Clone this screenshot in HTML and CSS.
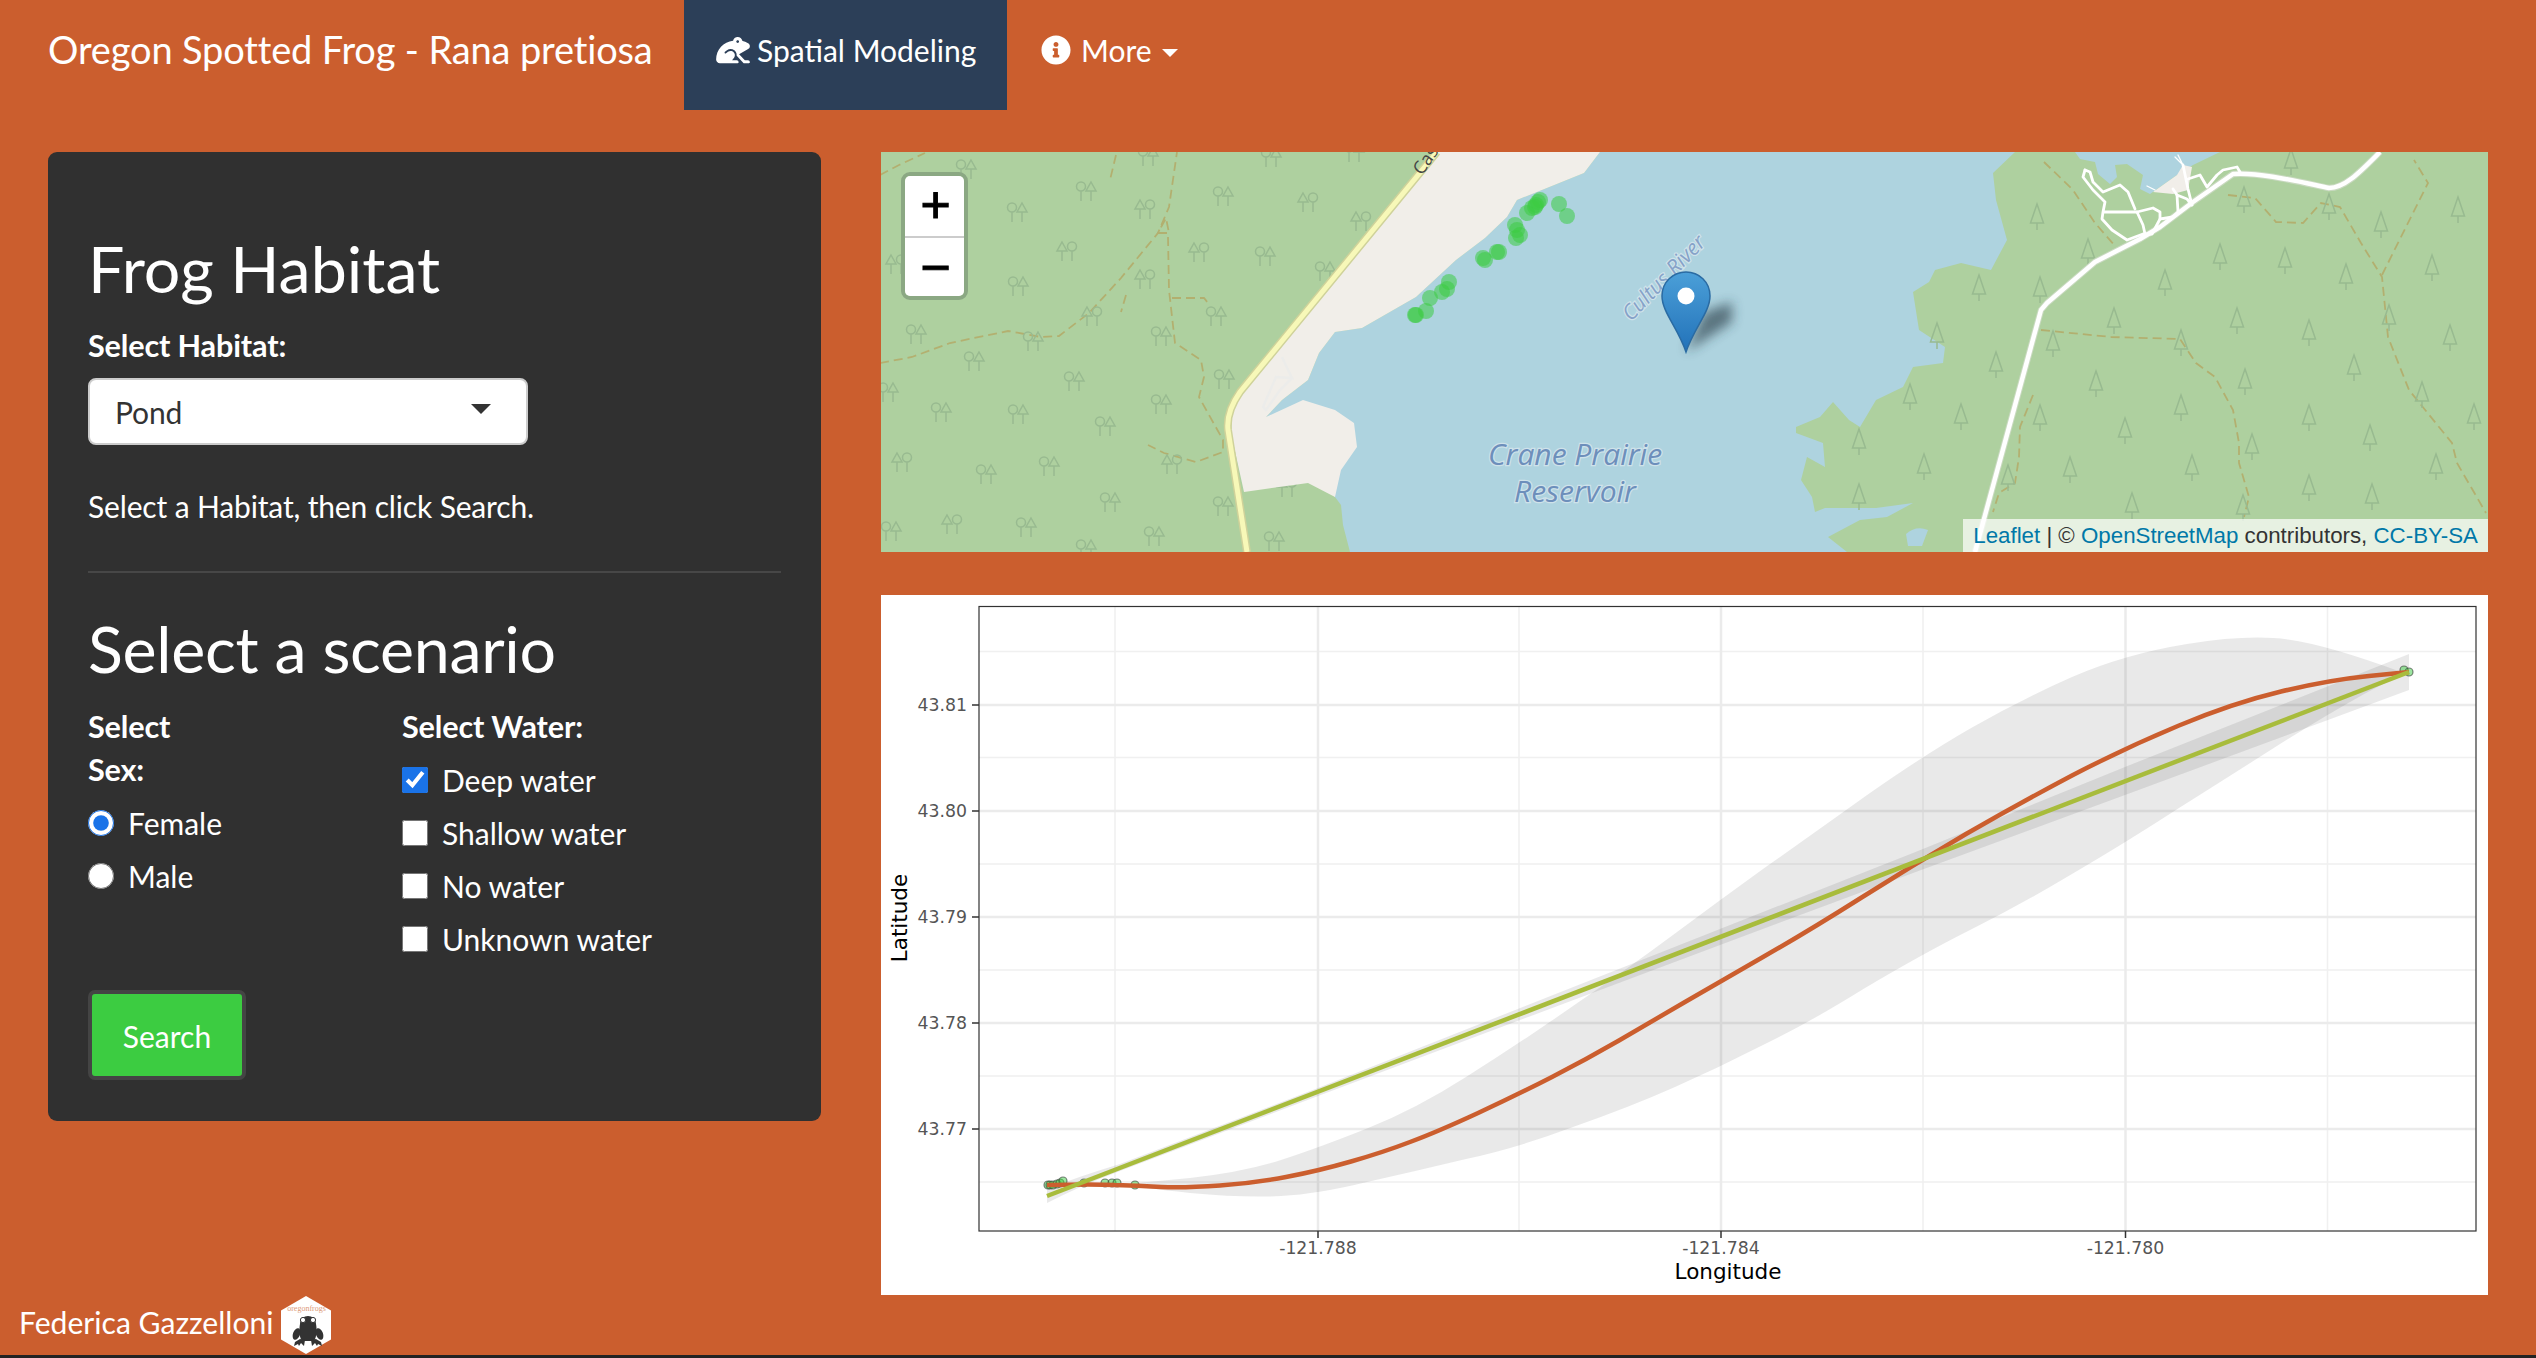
FILE: index.html
```html
<!DOCTYPE html>
<html lang="en">
<head>
<meta charset="utf-8">
<title>Oregon Spotted Frog - Rana pretiosa</title>
<link rel="stylesheet" href="styles.css">
</head>
<body>
<nav class="navbar">
  <a class="brand">Oregon Spotted Frog - Rana pretiosa</a>
  <a class="tab active">
    <svg class="ico ico-frog" viewBox="0 0 576 512"><path d="M446.53 97.43C439.67 60.23 407.19 32 368 32c-39.23 0-71.72 28.29-78.54 65.54C126.75 112.96-.5 250.12 0 416.98.11 451.9 29.08 480 64 480h304c8.84 0 16-7.16 16-16 0-17.67-14.33-32-32-32h-79.49l35.8-48.33c24.14-36.23 10.35-88.28-33.71-106.6-23.89-9.93-51.55-4.65-72.24 10.88l-32.76 24.59c-7.06 5.31-17.09 3.91-22.41-3.19-5.3-7.08-3.88-17.11 3.19-22.41l34.78-26.09c36.84-27.66 88.28-27.62 125.13 0 10.87 8.15 45.87 39.06 40.8 93.21L469.62 480H560c8.84 0 16-7.16 16-16 0-17.67-14.33-32-32-32h-53.63l-98.52-104.68 154.44-86.65A58.16 58.16 0 0 0 576 189.94c0-21.4-11.72-40.95-30.48-51.23-40.56-22.22-98.99-41.28-98.99-41.28zM368 136c-13.26 0-24-10.75-24-24 0-13.26 10.74-24 24-24 13.25 0 24 10.74 24 24 0 13.25-10.75 24-24 24z"/></svg>
    <span>Spatial Modeling</span>
  </a>
  <a class="tab more">
    <svg class="ico ico-info" viewBox="0 0 512 512"><path d="M256 8C119.043 8 8 119.083 8 256c0 136.997 111.043 248 248 248s248-111.003 248-248C504 119.083 392.957 8 256 8zm0 110c23.196 0 42 18.804 42 42s-18.804 42-42 42-42-18.804-42-42 18.804-42 42-42zm56 254c0 6.627-5.373 12-12 12h-88c-6.627 0-12-5.373-12-12v-24c0-6.627 5.373-12 12-12h12v-64h-12c-6.627 0-12-5.373-12-12v-24c0-6.627 5.373-12 12-12h64c6.627 0 12 5.373 12 12v100h12c6.627 0 12 5.373 12 12v24z"/></svg>
    <span>More</span>
    <span class="caret"></span>
  </a>
</nav>

<main class="main">
  <aside class="panel">
    <h2 class="panel-title">Frog Habitat</h2>
    <label class="field-label">Select Habitat:</label>
    <div class="select"><span>Pond</span><span class="select-caret"></span></div>
    <p class="help">Select a Habitat, then click Search.</p>
    <hr class="rule">
    <h2 class="panel-title scenario">Select a scenario</h2>
    <div class="choices">
      <div class="choice-col">
        <label class="field-label narrow">Select Sex:</label>
        <label class="opt"><input type="radio" name="sex" checked>Female</label>
        <label class="opt"><input type="radio" name="sex">Male</label>
      </div>
      <div class="choice-col">
        <label class="field-label">Select Water:</label>
        <label class="opt"><input type="checkbox" checked>Deep water</label>
        <label class="opt"><input type="checkbox">Shallow water</label>
        <label class="opt"><input type="checkbox">No water</label>
        <label class="opt"><input type="checkbox">Unknown water</label>
      </div>
    </div>
    <button class="search" type="button">Search</button>
  </aside>

  <section class="content">
    <div class="map">
      <svg class="map-svg" viewBox="881 152 1607 400" width="1607" height="400">
        <defs>
          <g id="dt" class="tree"><path d="M-5-10L0-1H-10Z"/><path d="M-5-1V9"/><circle cx="5" cy="-5.500" r="4.500"/><path d="M5-1V9"/></g>
          <g id="dr" class="tree"><circle cx="-5" cy="-5.500" r="4.500"/><path d="M-5-1V9"/><path d="M5-10L10-1H0Z"/><path d="M5-1V9"/></g>
          <g id="ct" class="tree"><path d="M0-13L6.500 6H-6.500Z"/><path d="M0 6V13"/></g>
          <linearGradient id="pin" x1="0" y1="0" x2="0" y2="1"><stop offset="0" stop-color="#4b9fd8"/><stop offset="1" stop-color="#2272b9"/></linearGradient>
          <filter id="blur" x="-50%" y="-50%" width="200%" height="200%"><feGaussianBlur stdDeviation="6"/></filter>
        </defs>
        <rect x="881" y="152" width="1607" height="400" class="forest"/>
        <use href="#dt" x="1287" y="488"/>
        <path class="water" d="M1600 152L1584 173L1517 200L1507 217L1485 238L1456 260L1416 297L1362 328L1335 332L1319 353L1308 380L1282 400L1266 417L1282 440L1335 497L1341 505L1343 525L1350 552H1847L1828 537L1860 520L1887 517L1913 503L1876 508H1825L1815 512L1812 497L1801 480L1807 457L1825 467L1823 443L1796 433V427L1820 417L1833 402L1849 420L1860 427L1876 400L1903 387L1913 367L1943 363L1945 347L1919 330L1913 292L1929 282L1935 270L1961 263L1991 270L2007 240L1996 200L1993 173L2015 152Z"/>
        <path class="water" d="M2075 152L2080 159L2095 162L2098 174L2110 184L2117 177L2115 165L2127 164L2143 175L2140 189L2150 194L2177 175L2193 165L2220 152Z"/>
        <path class="water" d="M1906 534Q1916 525 1928 530L1922 546L1908 546Z"/>
        <path class="sand" d="M1437 152H1600L1584 173L1517 200L1507 217L1485 238L1456 260L1416 297L1362 328L1335 332L1319 353L1308 380L1282 400L1266 417L1303 400L1335 410L1354 423L1357 447L1341 470L1335 497L1308 483L1244 492L1231 433L1233 403L1276 350Z"/>
        <path class="sand" d="M2153 192L2177 175L2183 165L2192 167L2188 190L2173 194Z"/>
        <g class="track">
          <path d="M880 363L912 357L950 343L1008 331L1041 337L1059 336L1089 313L1121 278L1158 233L1169 207L1177 152"/>
          <path d="M1168 237L1169 290L1175 343L1201 360L1204 377L1199 397L1223 440L1223 452L1196 462L1164 453L1148 445"/>
          <path d="M1172 298L1204 298L1208 303"/>
          <path d="M880 175L899 165L925 153"/>
          <path d="M1116 155L1110 180"/>
          <path d="M1126 295L1121 312"/>
          <path d="M1158 233H1169L1166 218Z"/>
          <path d="M2044 162L2073 190L2095 223L2116 247"/>
          <path d="M2041 330L2111 337L2180 339L2196 363L2215 377L2233 410L2239 443L2239 463L2249 497L2244 517"/>
          <path d="M2228 195L2255 198L2276 222L2303 223L2321 203L2340 207L2361 243L2382 277L2388 337L2409 390L2452 443L2457 463L2486 513"/>
          <path d="M2382 275L2428 183L2414 160"/>
          <path d="M2033 395L2020 427L2019 457L2015 483L1999 493L1993 512"/>
        </g>
        <use href="#dr" x="966" y="170"/><use href="#dr" x="1086" y="192"/><use href="#dr" x="1017" y="213"/><use href="#dt" x="1145" y="210"/><use href="#dr" x="1223" y="197"/><use href="#dt" x="1308" y="203"/><use href="#dt" x="1067" y="252"/><use href="#dt" x="1199" y="253"/><use href="#dr" x="1265" y="257"/><use href="#dt" x="1145" y="280"/><use href="#dr" x="1018" y="287"/><use href="#dt" x="896" y="265"/><use href="#dt" x="1092" y="317"/><use href="#dr" x="1216" y="317"/><use href="#dr" x="916" y="335"/><use href="#dr" x="1033" y="342"/><use href="#dr" x="1161" y="337"/><use href="#dr" x="974" y="362"/><use href="#dr" x="1074" y="382"/><use href="#dr" x="1224" y="380"/><use href="#dr" x="888" y="393"/><use href="#dr" x="1161" y="405"/><use href="#dr" x="1018" y="415"/><use href="#dr" x="941" y="413"/><use href="#dr" x="1105" y="427"/><use href="#dt" x="902" y="463"/><use href="#dr" x="1049" y="467"/><use href="#dr" x="986" y="475"/><use href="#dt" x="1172" y="465"/><use href="#dr" x="1110" y="503"/><use href="#dr" x="1223" y="507"/><use href="#dt" x="952" y="525"/><use href="#dr" x="1026" y="528"/><use href="#dr" x="1154" y="537"/><use href="#dr" x="891" y="532"/><use href="#dr" x="1274" y="542"/><use href="#dr" x="1271" y="158"/><use href="#dr" x="1148" y="157"/><use href="#dr" x="1354" y="153"/><use href="#dt" x="1361" y="222"/><use href="#dr" x="1325" y="272"/><use href="#dr" x="1086" y="550"/>
        <use href="#ct" x="2037" y="217"/><use href="#ct" x="2088" y="252"/><use href="#ct" x="2244" y="200"/><use href="#ct" x="2291" y="162"/><use href="#ct" x="2329" y="207"/><use href="#ct" x="2381" y="225"/><use href="#ct" x="2458" y="210"/><use href="#ct" x="2220" y="257"/><use href="#ct" x="2285" y="261"/><use href="#ct" x="2346" y="277"/><use href="#ct" x="2432" y="268"/><use href="#ct" x="1979" y="288"/><use href="#ct" x="2040" y="290"/><use href="#ct" x="2165" y="283"/><use href="#ct" x="2389" y="318"/><use href="#ct" x="2114" y="321"/><use href="#ct" x="2237" y="321"/><use href="#ct" x="2309" y="333"/><use href="#ct" x="2450" y="338"/><use href="#ct" x="1937" y="336"/><use href="#ct" x="2053" y="344"/><use href="#ct" x="2181" y="343"/><use href="#ct" x="1996" y="365"/><use href="#ct" x="2354" y="368"/><use href="#ct" x="2096" y="384"/><use href="#ct" x="2245" y="382"/><use href="#ct" x="1910" y="397"/><use href="#ct" x="2422" y="395"/><use href="#ct" x="1961" y="417"/><use href="#ct" x="2040" y="418"/><use href="#ct" x="2181" y="408"/><use href="#ct" x="2309" y="418"/><use href="#ct" x="2474" y="417"/><use href="#ct" x="2125" y="431"/><use href="#ct" x="2370" y="438"/><use href="#ct" x="1859" y="442"/><use href="#ct" x="2252" y="447"/><use href="#ct" x="1924" y="467"/><use href="#ct" x="2070" y="470"/><use href="#ct" x="2192" y="468"/><use href="#ct" x="2436" y="467"/><use href="#ct" x="2008" y="478"/><use href="#ct" x="2309" y="488"/><use href="#ct" x="1859" y="497"/><use href="#ct" x="2372" y="497"/><use href="#ct" x="2132" y="506"/><use href="#ct" x="2243" y="508"/>
        <path class="road-y-case" d="M1437 152L1240 392Q1226 412 1228 430L1247 552"/>
        <path class="road-y" d="M1437 152L1240 392Q1226 412 1228 430L1247 552"/>
        <path class="lane" d="M1282 357L1292 378L1276 377L1263 407L1266 410L1280 390L1292 378"/>
        <path class="road-w-case" d="M1975 552L2041 310L2047 303L2095 262L2140 239L2160 227L2193 202L2233 174C2260 172 2300 182 2329 188C2345 188 2360 172 2380 152"/>
        <path class="road-w" d="M1975 552L2041 310L2047 303L2095 262L2140 239L2160 227L2193 202L2233 174C2260 172 2300 182 2329 188C2345 188 2360 172 2380 152"/>
        <g class="lanes-w">
          <path d="M2085 170L2083 177L2093 190L2105 202L2103 212L2102 219L2112 230L2127 240L2143 234L2152 234L2160 219L2160 212L2153 208L2137 212L2103 212"/>
          <path d="M2085 170L2090 172L2093 182L2103 192L2120 185L2128 192L2135 209"/>
          <path d="M2137 212L2143 225L2145 234"/>
          <path d="M2160 219L2173 217L2178 212L2177 195L2187 199L2192 205"/>
          <path d="M2183 165L2188 189L2192 205"/>
          <path d="M2173 189L2177 195"/>
          <path d="M2188 179L2200 175L2207 187L2217 175L2223 170L2237 167L2240 172"/>
          <path class="lane-thin" d="M2175 157L2183 165M2178 155L2183 165M2147 186L2155 190"/>
        </g>
        <text class="road-label" transform="translate(1422 176) rotate(-55)">Cas</text>
        <text class="lake-label lake-1" x="1575" y="465">Crane Prairie</text>
        <text class="lake-label lake-1" x="1575" y="502">Reservoir</text>
        <text class="lake-label river" transform="translate(1631 322) rotate(-46)">Cultus River</text>
        <g class="dots">
          <circle cx="1415" cy="315" r="8"/><circle cx="1416" cy="315" r="8"/><circle cx="1426" cy="311" r="8"/><circle cx="1430" cy="298" r="8"/><circle cx="1442" cy="292" r="8"/><circle cx="1447" cy="289" r="8"/><circle cx="1449" cy="282" r="8"/><circle cx="1483" cy="258" r="8"/><circle cx="1485" cy="260" r="8"/><circle cx="1497" cy="252" r="8"/><circle cx="1499" cy="252" r="8"/><circle cx="1515" cy="225" r="8"/><circle cx="1517" cy="230" r="8"/><circle cx="1520" cy="235" r="8"/><circle cx="1516" cy="238" r="8"/><circle cx="1535" cy="207" r="8"/><circle cx="1540" cy="200" r="8"/><circle cx="1527" cy="213" r="8"/><circle cx="1536" cy="205" r="8"/><circle cx="1532" cy="208" r="8"/><circle cx="1559" cy="204" r="8"/><circle cx="1567" cy="216" r="8"/><circle cx="1538" cy="202" r="8"/>
        </g>
        <path class="pin-shadow" d="M1686 352L1704 312L1732 302L1732 322Z"/>
        <path class="pin" d="M1686 352C1678 328 1662 312 1662 296C1662 282 1673 272 1686 272C1699 272 1710 282 1710 296C1710 312 1694 328 1686 352Z"/>
        <circle class="pin-eye" cx="1686" cy="296" r="8.500"/>
      </svg>
      <div class="zoom-ctl">
        <a class="zoom-btn">+</a>
        <a class="zoom-btn">&#x2212;</a>
      </div>
      <div class="attrib"><a>Leaflet</a> | © <a>OpenStreetMap</a> contributors, <a>CC-BY-SA</a></div>
    </div>

    <div class="plot">
      <svg class="plot-svg" viewBox="881 595 1607 700" width="1607" height="700">
        <g class="grid-minor">
          <path d="M979 651.500H2476M979 757.500H2476M979 864H2476M979 970H2476M979 1076H2476M979 1182H2476"/>
          <path d="M1115 607V1231M1519 607V1231M1923 607V1231M2327.500 607V1231"/>
        </g>
        <g class="grid-major">
          <path d="M979 705H2476M979 811H2476M979 917H2476M979 1023H2476M979 1129H2476"/>
          <path d="M1318 607V1231M1721 607V1231M2125.500 607V1231"/>
        </g>
        <path class="band" d="M1137 1183L1190 1178Q1244 1172 1281 1160Q1318 1148 1367 1128.500Q1416 1109 1466 1077Q1517 1045 1573 1006Q1630 967 1675 933.500Q1720 900 1763 869Q1807 838 1865 796.500Q1924 755 1972 727.500Q2020 700 2072 677Q2125 654 2187 644Q2249 634 2288 639.500Q2328 645 2404 673L2366 693Q2328 714 2280 744Q2233 774 2179 808Q2125 843 2072 874Q2020 905 1972 929Q1924 953 1865 988Q1807 1024 1763 1045Q1720 1067 1675 1087Q1630 1107 1573 1127Q1517 1148 1466 1159Q1416 1171 1367 1182Q1318 1194 1281 1196Q1244 1198 1190 1193Q1137 1187 1137 1187Z"/>
        <path class="band" d="M1047 1189Q1080 1176 1120 1164L1318 1088L1720 929L1913 853L2125 767L2409 654V690L2125 795L1913 873L1720 945L1318 1096L1120 1171Q1080 1186 1047 1203Z"/>
        <g class="pts">
          <circle cx="1048" cy="1185" r="4"/><circle cx="1050" cy="1185" r="4"/><circle cx="1053" cy="1185" r="4"/><circle cx="1057" cy="1184" r="4"/><circle cx="1060" cy="1183" r="4"/><circle cx="1063" cy="1181" r="4"/><circle cx="1084" cy="1183" r="4"/><circle cx="1105" cy="1183" r="4"/><circle cx="1112" cy="1183" r="4"/><circle cx="1117" cy="1183" r="4"/><circle cx="1135" cy="1185" r="4"/><circle cx="2404" cy="670" r="4"/><circle cx="2409" cy="672" r="4"/>
        </g>
        <path class="loess" d="M1047 1185Q1094 1184 1115 1185Q1137 1185.500 1161 1187Q1185 1188 1220 1185.500Q1255 1183 1286 1177Q1318 1171 1351 1161.500Q1384 1152 1410 1142Q1437 1132 1477 1113.500Q1517 1095 1552 1077Q1587 1059 1619 1040.500Q1651 1022 1685 1002Q1720 982 1763 957Q1807 932 1860 898.500Q1913 865 1966 834Q2020 803 2072 775.500Q2125 748 2179 725.500Q2233 703 2281 691.500Q2329 680 2369 676L2409 672"/>
        <path class="lm" d="M1047 1196L2409 672"/>
        <rect class="frame" x="979" y="606.500" width="1497" height="624.500"/>
        <path class="ticks" d="M972 705H979M972 811H979M972 917H979M972 1023H979M972 1129H979M1318 1231V1238M1721 1231V1238M2125.500 1231V1238"/>
        <g class="ytick">
          <text x="967" y="711">43.81</text>
          <text x="967" y="817">43.80</text>
          <text x="967" y="923">43.79</text>
          <text x="967" y="1029">43.78</text>
          <text x="967" y="1135">43.77</text>
        </g>
        <g class="xtick">
          <text x="1318" y="1254">-121.788</text>
          <text x="1721" y="1254">-121.784</text>
          <text x="2125.500" y="1254">-121.780</text>
        </g>
        <text class="axis-title" x="1728" y="1279">Longitude</text>
        <text class="axis-title" transform="translate(907 918) rotate(-90)">Latitude</text>
      </svg>
    </div>
  </section>
</main>

<footer class="footer">
  <span class="author">Federica Gazzelloni</span>
  <svg class="hex" viewBox="0 0 50 58" width="50" height="58">
    <path class="hex-bg" d="M25 0L50 14.500V43.500L25 58L0 43.500V14.500Z"/>
    <text class="hex-name" x="25.500" y="15">oregonfrogs</text>
    <g class="hex-frog">
      <path d="M27 20C31 20 35 23 35 28C36 33 36 41 33 45H21C18 41 18 33 19 28C19 23 23 20 27 20Z"/>
      <ellipse cx="15.500" cy="38" rx="3.500" ry="6" transform="rotate(20 15.500 38)"/>
      <ellipse cx="38.500" cy="38" rx="3.500" ry="6" transform="rotate(-20 38.500 38)"/>
      <path d="M19 43L14 46L13 50L17 48L18 50L20 47L23 50L24 44Z"/>
      <path d="M35 43L40 46L41 50L37 48L36 50L34 47L31 50L30 44Z"/>
    </g>
    <circle class="hex-eye" cx="22" cy="24" r="2.600"/>
    <circle class="hex-eye" cx="32" cy="24" r="2.600"/>
  </svg>
</footer>
</body>
</html>
```
FILE: styles.css
```css
* { box-sizing: border-box; }
html, body { margin: 0; padding: 0; }
body {
  width: 2536px;
  height: 1358px;
  overflow: hidden;
  display: flex;
  flex-direction: column;
  background: #cb5e2e;
  color: #fff;
  font-family: "Lato", "Liberation Sans", sans-serif;
  font-size: 30px;
  letter-spacing: -.15px;
}

/* navbar */
.navbar {
  display: flex;
  height: 110px;
  flex: none;
  padding-left: 48px;
}
.brand {
  width: 636px;
  font-size: 38px;
  line-height: 98px;
  white-space: nowrap;
}
.tab {
  display: flex;
  align-items: flex-start;
  height: 110px;
  font-size: 30px;
  line-height: 100px;
  letter-spacing: 0;
  white-space: nowrap;
}
.tab.active {
  width: 323px;
  padding-left: 32px;
  background: #2c3f58;
  gap: 7px;
}
.tab.more {
  padding-left: 34px;
  gap: 10px;
}
.ico { fill: #fff; flex: none; margin-top: 35px; }
.ico-frog { width: 34px; height: 30px; }
.ico-info { width: 30px; height: 30px; }
.caret {
  width: 0;
  height: 0;
  margin-top: 49px;
  border-left: 8px solid transparent;
  border-right: 8px solid transparent;
  border-top: 8px solid #fff;
}

/* layout */
.main {
  flex: none;
  height: 1185px;
  padding: 42px 48px 0;
  display: flex;
  gap: 60px;
  align-items: flex-start;
}
.content {
  width: 1607px;
  display: flex;
  flex-direction: column;
  gap: 43px;
}

/* sidebar */
.panel {
  width: 773px;
  height: 969px;
  flex: none;
  padding: 78px 40px 40px;
  background: #303030;
  border-radius: 9px;
}
.panel-title {
  margin: 0;
  font-size: 64.500px;
  font-weight: 400;
  line-height: 77px;
  letter-spacing: 0;
}
.panel-title.scenario { margin-top: 37px; letter-spacing: -.3px; }
.field-label {
  display: block;
  margin-top: 18px;
  font-size: 30.600px;
  font-weight: 700;
  line-height: 42px;
}
.field-label.narrow { max-width: 120px; }
.select {
  width: 440px;
  height: 67px;
  margin-top: 11px;
  padding: 0 25px;
  display: flex;
  align-items: center;
  justify-content: space-between;
  background: #fff;
  border: 2px solid #ccc;
  border-radius: 8px;
  color: #333;
}
.select-caret {
  width: 0;
  height: 0;
  margin-top: -6px;
  margin-right: 10px;
  border-left: 10px solid transparent;
  border-right: 10px solid transparent;
  border-top: 10px solid #333;
}
.help {
  margin: 40px 0 0;
  line-height: 42px;
}
.rule {
  margin: 44px 0 0;
  height: 2px;
  border: 0;
  background: #474747;
}
.choices {
  display: flex;
  margin-top: 1px;
}
.choice-col { display: flex; flex-direction: column; }
.choice-col:first-child { width: 314px; }
.choice-col .field-label { line-height: 42.500px; }
.choice-col .field-label + .opt { margin-top: 5px; }
.opt {
  display: flex;
  align-items: center;
  gap: 14px;
  height: 53px;
  letter-spacing: 0;
}
.opt input {
  width: 26px;
  height: 26px;
  margin: 0;
  flex: none;
  accent-color: #1a73e8;
}
.search {
  display: block;
  width: 158px;
  height: 90px;
  margin-top: 24px;
  padding: 2px 0 0;
  background: #3ccc41;
  border: 4px solid #444;
  border-radius: 7px;
  color: #fff;
  font: inherit;
  letter-spacing: 0;
}

/* map */
.map {
  position: relative;
  height: 400px;
  overflow: hidden;
  letter-spacing: 0;
}
.map-svg, .plot-svg { display: block; letter-spacing: 0; }
.forest { fill: #aed09f; }
.water { fill: #aed3df; }
.sand { fill: #f1eee9; }
.tree { fill: none; stroke: #98ba90; stroke-width: 1.500; }
.track { fill: none; stroke: #b5a25c; stroke-width: 1.800; stroke-dasharray: 9 5; opacity: .7; }
.road-y-case { fill: none; stroke: #cfd29a; stroke-width: 8; }
.road-y { fill: none; stroke: #f7f8b8; stroke-width: 5; }
.road-w-case { fill: none; stroke: #c9d9c0; stroke-width: 6.500; stroke-linejoin: round; }
.road-w { fill: none; stroke: #fff; stroke-width: 4.500; stroke-linejoin: round; }
.lane { fill: none; stroke: #ececea; stroke-width: 2.500; }
.lanes-w { fill: none; stroke: #fff; stroke-width: 2.800; stroke-linejoin: round; stroke-linecap: round; }
.lanes-w .lane-thin { stroke-width: 1.300; }
.road-label { font: 18px "Open Sans", sans-serif; fill: #444; }
.lake-label {
  font-family: "Open Sans", sans-serif;
  font-style: italic;
  fill: #6d8fbb;
  stroke: #cfe2ea;
  stroke-width: 2.500px;
  paint-order: stroke;
}
.lake-1 { font-size: 30px; text-anchor: middle; }
.river { font-size: 21px; fill: #86a2c8; }
.dots circle { fill: #3ccc41; fill-opacity: .55; }
.pin-shadow { fill: #23353f; opacity: .6; filter: url(#blur); }
.pin { fill: url(#pin); stroke: #2a6ba3; stroke-width: 1.500; }
.pin-eye { fill: #fff; }
.zoom-ctl {
  position: absolute;
  left: 20px;
  top: 20px;
  width: 67px;
  border: 4px solid #8ba883;
  border-radius: 9px;
  overflow: hidden;
}
.zoom-btn {
  display: block;
  height: 60px;
  padding: 7px 0 0 2px;
  background: #fff;
  color: #000;
  font: 400 52px/53px "Liberation Mono", monospace;
  -webkit-text-stroke: 1px #000;
  text-align: center;
}
.zoom-btn + .zoom-btn { border-top: 2px solid #ccc; }
.attrib {
  position: absolute;
  right: 0;
  bottom: 0;
  height: 33px;
  padding: 0 10px;
  background: rgba(255, 255, 255, .7);
  color: #333;
  font: 22.300px/33px "Liberation Sans", sans-serif;
  white-space: nowrap;
}
.attrib a { color: #0078a8; }

/* plot */
.plot { height: 700px; background: #fff; }
.grid-minor path { fill: none; stroke: #f0f0f0; stroke-width: 1.500; }
.grid-major path { fill: none; stroke: #ebebeb; stroke-width: 2.500; }
.band { fill: #333; fill-opacity: .105; }
.pts circle { fill: #3ccc41; fill-opacity: .5; stroke: #333; stroke-opacity: .6; stroke-width: 1.200; }
.loess { fill: none; stroke: #cb5e2e; stroke-width: 4.500; }
.lm { fill: none; stroke: #a8bc3c; stroke-width: 4.500; }
.frame { fill: none; stroke: #333; stroke-width: 1.200; }
.ticks { fill: none; stroke: #333; stroke-width: 1.500; }
.ytick text, .xtick text {
  font: 17.300px "DejaVu Sans", sans-serif;
  fill: #555;
}
.ytick text { text-anchor: end; }
.xtick text { text-anchor: middle; }
.axis-title {
  font: 21.500px "DejaVu Sans", sans-serif;
  fill: #000;
  text-anchor: middle;
}

/* footer */
.footer {
  flex: none;
  height: 63px;
  display: flex;
  align-items: flex-start;
  gap: 7px;
  padding-left: 19px;
  border-bottom: 3px solid #222;
}
.author {
  font-size: 30.100px;
  line-height: 55px;
  letter-spacing: 0;
}
.hex { display: block; margin-top: 1px; }
.hex-bg { fill: #fff; }
.hex-name {
  font: 8px "Liberation Serif", serif;
  fill: #dd9a78;
  text-anchor: middle;
  letter-spacing: 0;
}
.hex-frog { fill: #333; }
.hex-eye { fill: #fff; stroke: #333; stroke-width: 1; }
```
